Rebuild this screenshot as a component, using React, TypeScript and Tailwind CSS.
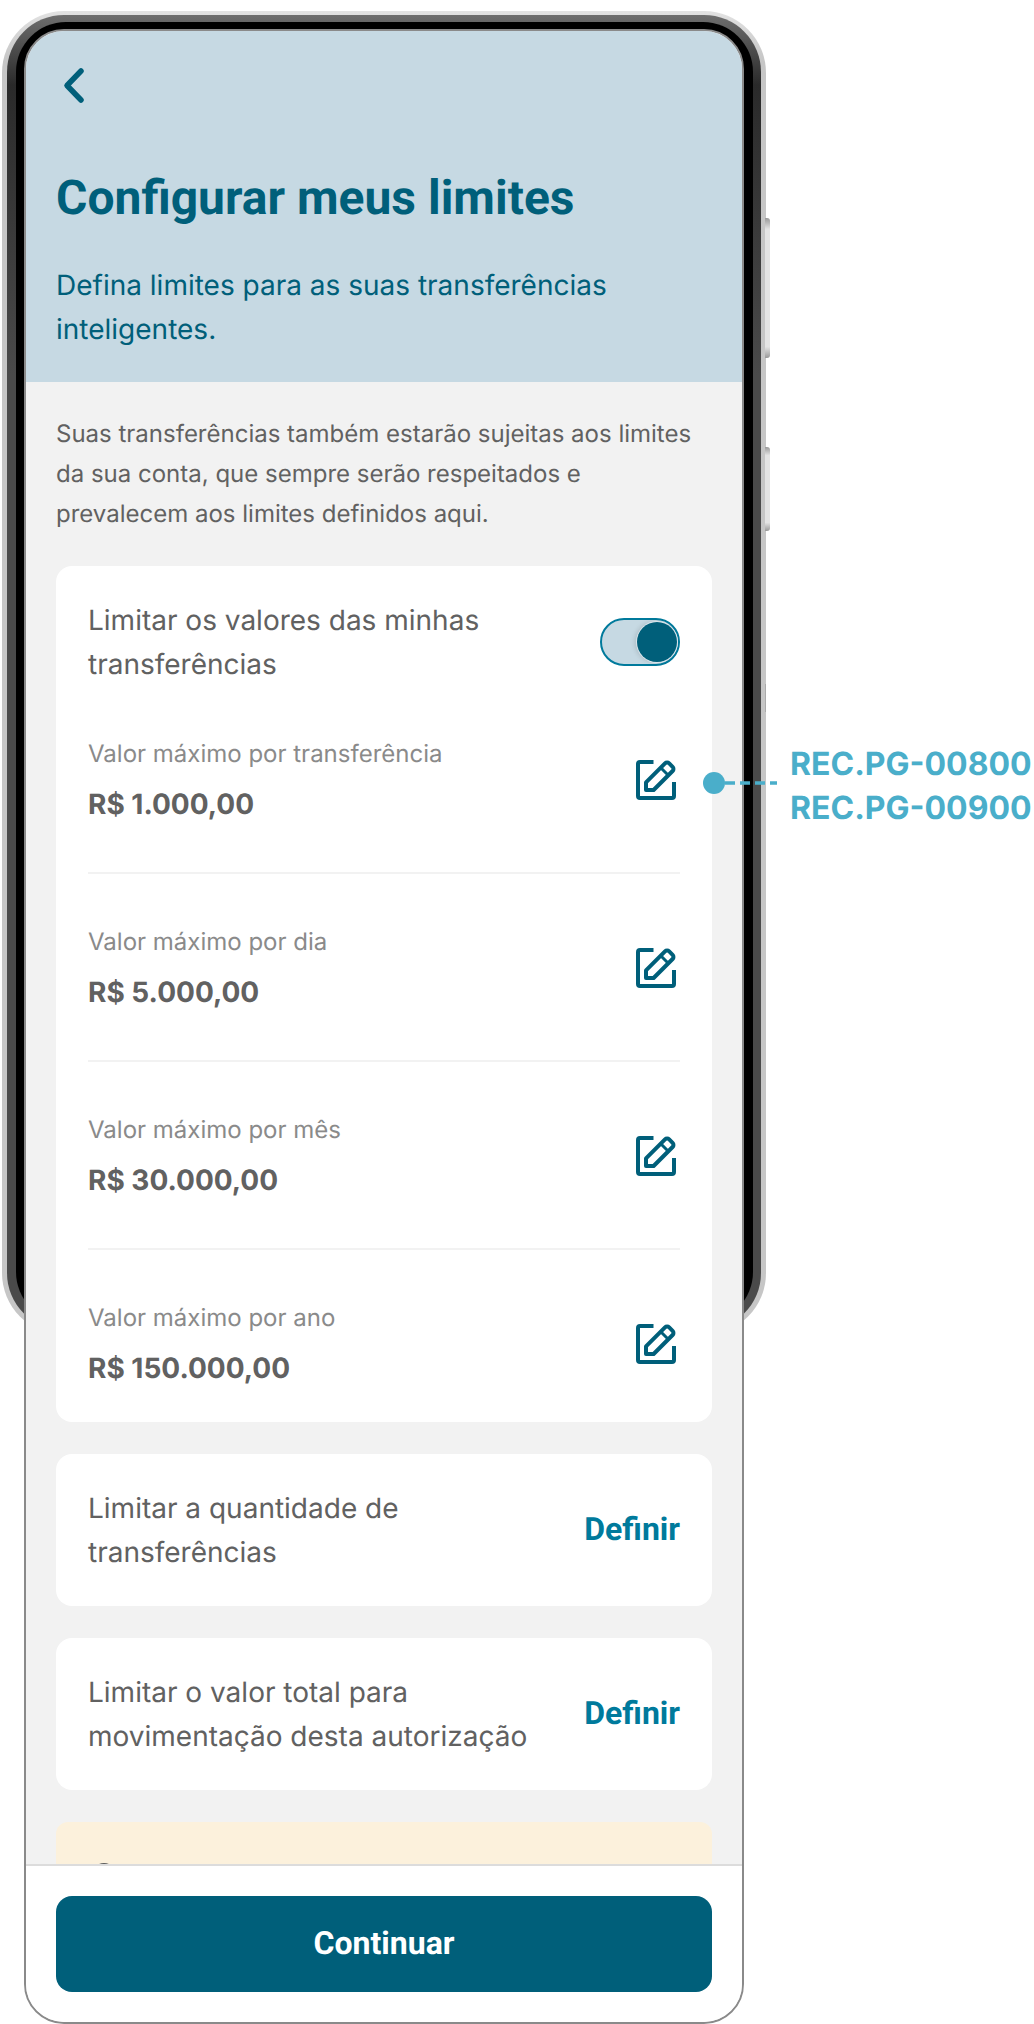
import React from "react";

const Pencil = () => (
  <svg width="40" height="40" viewBox="0 0 40 40" fill="none" className="shrink-0 mr-[4px]">
    <path d="M17.5 2H4a2 2 0 0 0-2 2v32a2 2 0 0 0 2 2h32a2 2 0 0 0 2-2V22" stroke="#005f7a" strokeWidth="4" />
    <path d="M10 30v-7.6L29 3.4a3 3 0 0 1 4.2 0l3.4 3.4a3 3 0 0 1 0 4.2L17.6 30z" stroke="#005f7a" strokeWidth="4" strokeLinejoin="round" />
    <path d="M25 8l7 7" stroke="#005f7a" strokeWidth="3" />
  </svg>
);

const Row = ({ label, value, last }: { label: string; value: string; last?: boolean }) => (
  <div className={last ? "flex items-center justify-between pt-[48px]" : "flex items-center justify-between border-b-2 border-[#f2f2f2] pt-[48px] pb-[46px]"}>
    <div className="flex flex-col">
      <span className="text-[24px] leading-[40px] text-[#8a8a8a]">{label}</span>
      <span className="text-[28px] leading-[44px] mt-[8px] font-bold text-[#616161]">{value}</span>
    </div>
    <Pencil />
  </div>
);

const DefineCard = ({ a, b }: { a: string; b: string }) => (
  <div className="bg-white rounded-[16px] px-[32px] py-[32px] flex items-center justify-between">
    <div className="text-[28px] leading-[44px] text-[#616161]">
      <div>{a}</div>
      <div>{b}</div>
    </div>
    <span className="text-[32px] font-bold text-[#007a9c] pb-[2px] [font-family:Roboto,sans-serif]">Definir</span>
  </div>
);

export default function App() {
  return (
    <div className="relative w-[1034px] h-[2024px] bg-white overflow-hidden [font-family:Inter,sans-serif] [text-rendering:geometricPrecision]">
      {/* device frame, behind the screen */}
      <div className="absolute left-[2px] top-[11px] w-[764px] h-[1324px] rounded-[62px] bg-[linear-gradient(180deg,#e2e2e2_0px,#c6c6c6_50px)] p-[5px] pt-[4px]">
        <div className="w-full h-full rounded-[57px] bg-[linear-gradient(180deg,#6e6e6e_0px,#2a2a2a_70px,#4a4a4a_360px)] p-[8px] pt-[7px] pl-[9px]">
          <div className="w-full h-full rounded-[50px] bg-black"></div>
        </div>
      </div>
      <div className="absolute left-[765px] top-[218px] w-[5px] h-[140px] rounded-r-[3px] bg-[linear-gradient(180deg,#9a9a9a,#e4e4e4_8%,#e4e4e4_92%,#9a9a9a)]"></div>
      <div className="absolute left-[765px] top-[447px] w-[5px] h-[84px] rounded-r-[3px] bg-[linear-gradient(180deg,#9a9a9a,#e4e4e4_10%,#e4e4e4_90%,#9a9a9a)]"></div>
      <div className="absolute left-[765px] top-[684px] w-[1px] h-[28px] bg-[#aaaaaa]"></div>

      {/* screen */}
      <div className="absolute left-[24px] top-[29px] w-[720px] h-[1995px] rounded-[40px] border-2 border-[#8a8a8a] overflow-hidden flex flex-col bg-[#f2f2f2]">
        <div className="bg-[#c6d9e3] h-[351px] shrink-0 px-[30px] flex flex-col">
          <svg width="24" height="38" viewBox="0 0 24 38" fill="none" className="mt-[36px] ml-[6px]">
            <path d="M19 4L5 18.5L19 33" stroke="#005f7a" strokeWidth="5.5" strokeLinecap="round" strokeLinejoin="round" />
          </svg>
          <h1 className="mt-[65px] text-[48px] leading-[56px] font-bold text-[#005f7a] [font-family:Roboto,sans-serif]">Configurar meus limites</h1>
          <p className="mt-[37px] text-[28px] leading-[44px] text-[#005f7a]">
            Defina limites para as suas transferências
            <br />
            inteligentes.
          </p>
        </div>

        <div className="flex-1 min-h-0 overflow-hidden px-[30px] pt-[32px]">
          <p className="text-[24px] leading-[40px] text-[#616161]">
            Suas transferências também estarão sujeitas aos limites
            <br />
            da sua conta, que sempre serão respeitados e
            <br />
            prevalecem aos limites definidos aqui.
          </p>
          <div className="mt-[32px] bg-white rounded-[16px] px-[32px] pt-[32px] pb-[32px]">
            <div className="flex items-center justify-between">
              <div className="text-[28px] leading-[44px] text-[#616161]">
                <div>Limitar os valores das minhas</div>
                <div>transferências</div>
              </div>
              <div className="w-[80px] h-[48px] rounded-full border-2 border-[#007a9c] bg-[#c6d9e3] flex items-center justify-end pr-[1px]">
                <div className="w-[40px] h-[40px] rounded-full bg-[#005f7a] shadow-[0_0_0_1px_#dbe6ec,-2px_0_5px_rgba(0,0,0,0.15)]"></div>
              </div>
            </div>
            <Row label="Valor máximo por transferência" value="R$ 1.000,00" />
            <Row label="Valor máximo por dia" value="R$ 5.000,00" />
            <Row label="Valor máximo por mês" value="R$ 30.000,00" />
            <Row label="Valor máximo por ano" value="R$ 150.000,00" last />
          </div>
          <div className="mt-[32px] flex flex-col gap-[32px]">
            <DefineCard a="Limitar a quantidade de" b="transferências" />
            <DefineCard a="Limitar o valor total para" b="movimentação desta autorização" />
            <div className="bg-[#fcf1dc] rounded-t-[12px] h-[100px] px-[32px] pt-[41px]">
              <div className="ml-[4px] w-[24px] h-[24px] rounded-full border-[3px] border-[#5c5c5c]"></div>
            </div>
          </div>
        </div>

        <div className="shrink-0 h-[158px] bg-white border-t-2 border-[#dcdcdc] px-[30px] pt-[30px]">
          <div className="h-[96px] rounded-[16px] bg-[#005f7a] flex items-center justify-center pb-[2px] text-white text-[32px] font-bold [font-family:Roboto,sans-serif]">Continuar</div>
        </div>
      </div>

      {/* annotation */}
      <div className="absolute left-[703px] top-[772px] w-[22px] h-[22px] rounded-full bg-[#4aaeca]"></div>
      <svg className="absolute left-[725px] top-[781px]" width="52" height="4" viewBox="0 0 52 4">
        <path d="M0 2H52" stroke="#4aaeca" strokeWidth="3.5" strokeDasharray="10 5" />
      </svg>
      <div className="absolute left-[790px] top-[742px] text-[32px] leading-[44px] font-bold text-[#4aaeca] whitespace-nowrap">
        <div>REC.PG-00800</div>
        <div>REC.PG-00900</div>
      </div>
    </div>
  );
}
